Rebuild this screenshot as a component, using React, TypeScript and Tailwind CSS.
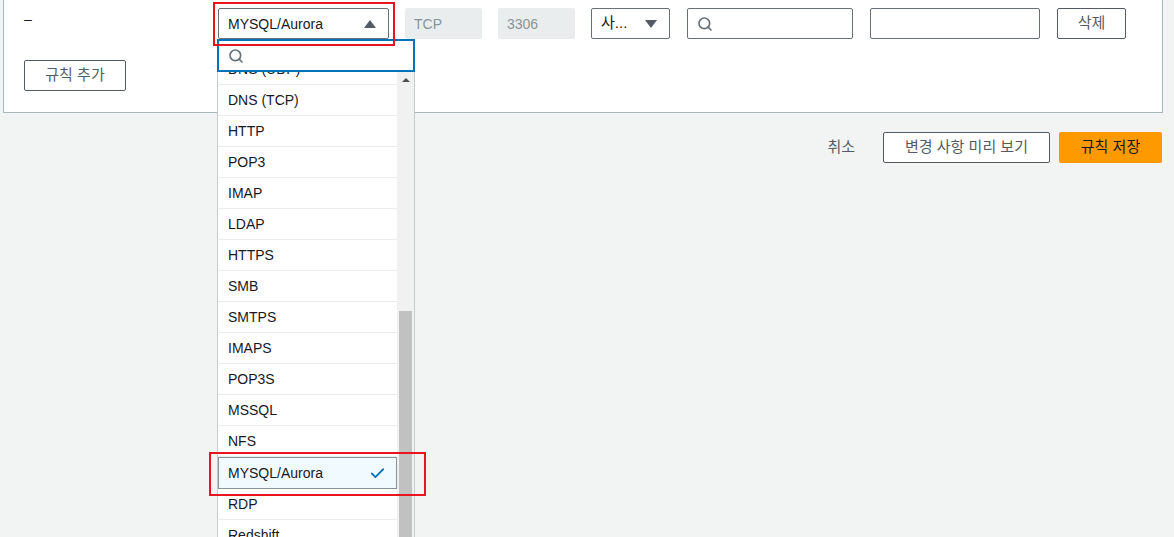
import { Check, Search } from "lucide-react";

const OPTIONS = [
  "DNS (UDP)",
  "DNS (TCP)",
  "HTTP",
  "POP3",
  "IMAP",
  "LDAP",
  "HTTPS",
  "SMB",
  "SMTPS",
  "IMAPS",
  "POP3S",
  "MSSQL",
  "NFS",
  "MYSQL/Aurora",
  "RDP",
  "Redshift",
  "Oracle-RDS",
];

const font = "font-['Liberation_Sans','Noto_Sans_CJK_KR',sans-serif]";

function Dropdown() {
  return (
    <div className="absolute left-[-1px] top-[31px] z-10 w-[198px]">
      <div className="flex h-[33px] items-center border-2 border-[#0073bb] bg-white pl-[9px]">
        <Search className="h-[16px] w-[16px] text-[#687078]" strokeWidth={2.5} />
      </div>
      <div className="flex h-[470px] border-l border-r border-[#c6cccc] bg-white">
        <div className="h-full w-[179px] overflow-hidden">
          <div className="-mt-[18px]">
            {OPTIONS.map((o) =>
              o === "MYSQL/Aurora" ? (
                <div
                  key={o}
                  className="flex h-[32px] items-center justify-between border border-[#879596] bg-[#f1faff] pl-[9px] pr-[10px] text-[14px] text-[#16191f]"
                >
                  {o}
                  <Check className="h-[17px] w-[17px] text-[#0073bb]" strokeWidth={2.5} />
                </div>
              ) : (
                <div
                  key={o}
                  className="flex h-[31px] items-center border-b border-[#eaeded] pl-[10px] text-[14px] text-[#16191f]"
                >
                  {o}
                </div>
              )
            )}
          </div>
        </div>
        <div className="flex w-[17px] flex-col items-center bg-[#f1f1f1]">
          <div className="mt-[6px] h-0 w-0 border-x-[4px] border-b-[4px] border-x-transparent border-b-[#505050]" />
          <div className="mt-[229px] h-[240px] w-[13px] bg-[#c1c1c1]" />
        </div>
      </div>
    </div>
  );
}

export default function App() {
  return (
    <div className={`relative h-[537px] overflow-hidden bg-[#f2f3f3] ${font}`}>
      <div className="relative ml-[3px] h-[113px] w-[1160px] border-x border-b border-[#aab7b8] bg-white pl-[20px] pt-[8px]">
        <div className="flex items-start">
          <div className="w-[194px] pt-[1px] text-[14px] text-[#16191f]">–</div>

          <div className="relative w-[171px]">
            <div className="flex h-[31px] items-center justify-between rounded-[2px] border border-[#687078] pl-[9px] pr-[12px] pt-[1px] text-[14px] text-[#16191f]">
              MYSQL/Aurora
              <span className="h-0 w-0 border-x-[6px] border-b-[8px] border-x-transparent border-b-[#545b64]" />
            </div>
            <div className="pointer-events-none absolute left-[-5px] top-[-6px] z-20 h-[44px] w-[182px] border-2 border-[#e8141e]" />
            <Dropdown />
          </div>

          <div className="ml-[16px] flex h-[31px] w-[77px] items-center rounded-[2px] bg-[#eaeded] pl-[9px] pt-[1px] text-[14px] text-[#879596]">
            TCP
          </div>
          <div className="ml-[16px] flex h-[31px] w-[77px] items-center rounded-[2px] bg-[#eaeded] pl-[9px] pt-[1px] text-[14px] text-[#879596]">
            3306
          </div>
          <div className="ml-[16px] flex h-[31px] w-[79px] items-center justify-between rounded-[2px] border border-[#687078] pl-[9px] pr-[12px] text-[15px] text-[#16191f]">
            사...
            <span className="h-0 w-0 border-x-[6px] border-t-[8px] border-x-transparent border-t-[#545b64]" />
          </div>
          <div className="ml-[17px] flex h-[31px] w-[166px] items-center rounded-[2px] border border-[#687078] pl-[9px]">
            <Search className="h-[16px] w-[16px] text-[#687078]" strokeWidth={2.5} />
          </div>
          <div className="ml-[17px] h-[31px] w-[170px] rounded-[2px] border border-[#687078]" />
          <button className="ml-[17px] flex h-[31px] w-[69px] items-center justify-center rounded-[2px] border border-[#545b64] bg-white text-[15px] text-[#545b64]">
            삭제
          </button>
        </div>

        <button className="mt-[21px] flex h-[31px] w-[102px] items-center justify-center rounded-[2px] border border-[#545b64] bg-white text-[15px] text-[#545b64]">
          규칙 추가
        </button>
      </div>

      <div className="mt-[19px] flex w-[1162px] items-center justify-end">
        <button className="px-[28px] text-[15px] text-[#545b64]">취소</button>
        <button className="flex h-[31px] w-[167px] items-center justify-center rounded-[2px] border border-[#545b64] bg-white text-[15px] text-[#545b64]">
          변경 사항 미리 보기
        </button>
        <button className="ml-[9px] flex h-[31px] w-[103px] items-center justify-center rounded-[2px] bg-[#ff9900] text-[15px] text-[#16191f]">
          규칙 저장
        </button>
      </div>

      <div className="pointer-events-none absolute left-[209px] top-[452px] z-20 h-[44px] w-[217px] border-2 border-[#e8141e]" />
    </div>
  );
}
